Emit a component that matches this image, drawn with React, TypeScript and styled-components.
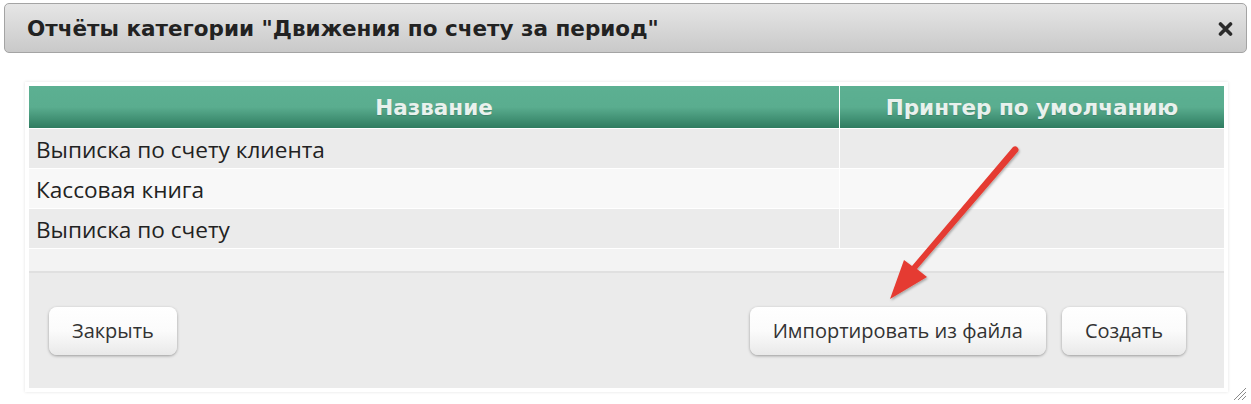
import React from "react";
import styled, { createGlobalStyle } from "styled-components";

const GlobalStyle = createGlobalStyle`
    html, body {
        margin: 0;
        padding: 0;
        background: #ffffff;
    }
    body {
        font-family: "Open Sans", "Noto Sans", sans-serif;
    }
`;

const reports = [
    { name: "Выписка по счету клиента", printer: "" },
    { name: "Кассовая книга", printer: "" },
    { name: "Выписка по счету", printer: "" },
];

export default function App() {
    return (
        <>
            <GlobalStyle />
            <Dialog>
                <TitleBar>
                    <Title>Отчёты категории "Движения по счету за период"</Title>
                    <CloseButton aria-label="close">
                        <svg width="15" height="14" viewBox="0 0 15 14">
                            <path d="M2.5 2 L12.5 12 M12.5 2 L2.5 12" stroke="#2b2b2b" strokeWidth="3.6" strokeLinecap="round" />
                        </svg>
                    </CloseButton>
                </TitleBar>
                <Panel>
                    <Table>
                        <thead>
                            <tr>
                                <HeadCell $width={810}>Название</HeadCell>
                                <HeadCell>Принтер по умолчанию</HeadCell>
                            </tr>
                        </thead>
                        <tbody>
                            {reports.map((r, i) => (
                                <Row key={r.name} $odd={i % 2 === 0}>
                                    <Cell>{r.name}</Cell>
                                    <Cell>{r.printer}</Cell>
                                </Row>
                            ))}
                        </tbody>
                    </Table>
                    <Spacer />
                    <Footer>
                        <Button>Закрыть</Button>
                        <RightButtons>
                            <Button>Импортировать из файла</Button>
                            <Button>Создать</Button>
                        </RightButtons>
                    </Footer>
                </Panel>
                <Arrow width="150" height="170" viewBox="0 0 150 170">
                    <defs>
                        <filter id="sh" x="-20%" y="-20%" width="140%" height="140%">
                            <feDropShadow dx="1" dy="1.5" stdDeviation="1" floodColor="#000" floodOpacity="0.3" />
                        </filter>
                    </defs>
                    <path
                        d="M129.5 4.5 Q131.5 6.5 130 8.5 L29 126 L39 134 L2 156 L16 117 L24 123 L125 4 Q127.5 2.5 129.5 4.5 Z"
                        fill="#e53b30"
                        filter="url(#sh)"
                    />
                </Arrow>
                <Grip width="14" height="16" viewBox="0 0 14 16">
                    <path d="M1 15 L13 3 M5 15 L13 7 M9 15 L13 11" stroke="#8a8a8a" strokeWidth="1" />
                </Grip>
            </Dialog>
        </>
    );
}

const Dialog = styled.div`
    position: relative;
    width: 1251px;
    height: 404px;
    padding: 3px 4px 0 4px;
    box-sizing: border-box;
`;

const TitleBar = styled.div`
    height: 50px;
    box-sizing: border-box;
    border: 1px solid #a4a4a4;
    border-radius: 5px;
    background: linear-gradient(#e6e6e6, #c9c9c9);
    display: flex;
    align-items: center;
    justify-content: space-between;
    padding: 0 13px 0 22px;
`;

const Title = styled.h1`
    margin: 0;
    font-family: "DejaVu Sans", Verdana, sans-serif;
    font-weight: bold;
    font-size: 21.5px;
    color: #222;
`;

const CloseButton = styled.span`
    display: flex;
    width: 15px;
    height: 14px;
    margin-top: 1px;
`;

const Panel = styled.div`
    margin: 29px 0 0 21px;
    width: 1203px;
    padding: 4px;
    box-sizing: border-box;
    background: #fff;
    box-shadow: 0 0 3px rgba(0, 0, 0, 0.12);
`;

const Table = styled.table`
    width: 100%;
    border-collapse: collapse;
    table-layout: fixed;
`;

const HeadCell = styled.th<{ $width?: number }>`
    width: ${(p) => (p.$width ? `${p.$width}px` : "auto")};
    height: 42px;
    padding: 0;
    border-right: 1px solid #fff;
    background: linear-gradient(#5cb092 0%, #5aad8f 50%, #2f7c60 100%);
    font-family: "DejaVu Sans", Verdana, sans-serif;
    font-weight: bold;
    font-size: 21.5px;
    color: #e9f1ed;
    text-align: center;
    text-shadow: 0 1px 1px rgba(0, 0, 0, 0.15);
    &:last-child {
        border-right: none;
    }
`;

const Row = styled.tr<{ $odd: boolean }>`
    background: ${(p) => (p.$odd ? "#ebebeb" : "#f8f8f8")};
    border-top: 1px solid #fff;
`;

const Cell = styled.td`
    height: 37px;
    padding: 2px 0 0 7px;
    font-size: 22.6px;
    line-height: 30px;
    color: #222;
    border-right: 1px solid #fff;
    &:last-child {
        border-right: none;
    }
`;

const Spacer = styled.div`
    height: 22px;
    background: #f3f3f3;
    border-top: 1px solid #fff;
    border-bottom: 2px solid #e0e0e0;
`;

const Footer = styled.div`
    height: 115px;
    background: #ebebeb;
    display: flex;
    align-items: center;
    justify-content: space-between;
    padding: 0 38px 0 20px;
    box-sizing: border-box;
`;

const RightButtons = styled.div`
    display: flex;
    gap: 16px;
`;

const Button = styled.button`
    height: 48px;
    padding: 0 23px;
    border: none;
    border-radius: 8px;
    background: linear-gradient(#ffffff 0%, #fbfbfb 50%, #e9e9e9 100%);
    box-shadow: 0 1px 3px rgba(0, 0, 0, 0.35);
    font-family: "Open Sans", "Noto Sans", sans-serif;
    font-size: 20px;
    color: #333;
    cursor: pointer;
`;

const Arrow = styled.svg`
    position: absolute;
    left: 888px;
    top: 143px;
`;

const Grip = styled.svg`
    position: absolute;
    left: 1233px;
    top: 385px;
`;
